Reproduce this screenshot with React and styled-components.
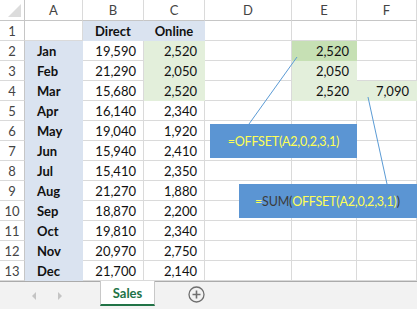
import React from 'react'
import styled, { createGlobalStyle } from 'styled-components'

const GlobalStyle = createGlobalStyle`
  html, body {
    margin: 0;
    padding: 0;
    background: #ffffff;
  }
  body {
    font-family: Lato, "Open Sans", Arial, sans-serif;
    width: 417px;
    height: 309px;
    overflow: hidden;
  }
`

const Frame = styled.div`
  position: relative;
  width: 417px;
  height: 309px;
  display: flex;
  flex-direction: column;
  overflow: hidden;
`

const Grid = styled.div`
  display: grid;
  grid-template-columns: 25px 58px 61px 61px 87px 65px 1fr;
  grid-template-rows: 21px repeat(13, 20px);
`

const Corner = styled.div`
  position: relative;
  box-sizing: border-box;
  border-right: 1px solid #c6c6c6;
  border-bottom: 1px solid #c6c6c6;
  background: #fff;

  &::after {
    content: '';
    position: absolute;
    right: 3px;
    bottom: 3px;
    width: 0;
    height: 0;
    border-left: 13px solid transparent;
    border-bottom: 13px solid #dcdcdc;
  }
`

const ColHead = styled.div`
  box-sizing: border-box;
  border-right: 1px solid #dadada;
  border-bottom: 1px solid #c6c6c6;
  display: flex;
  align-items: center;
  justify-content: center;
  font-size: 13px;
  color: #444;
  background: #fff;
`

const RowHead = styled.div`
  box-sizing: border-box;
  border-right: 1px solid #c6c6c6;
  border-bottom: 1px solid #dadada;
  display: flex;
  align-items: center;
  justify-content: center;
  font-size: 13px;
  color: #444;
  background: #fff;
`

const fills = {
  blue: '#dae3f0',
  green: '#e3efdb',
  dark: '#c6e0b4',
}

const Cell = styled.div`
  box-sizing: border-box;
  border-right: 1px solid ${(p) => (p.$fill ? 'transparent' : '#dadada')};
  border-bottom: 1px solid ${(p) => (p.$fill ? 'transparent' : '#dadada')};
  background: ${(p) => (p.$fill ? fills[p.$fill] : '#fff')};
  display: flex;
  align-items: center;
  justify-content: ${(p) =>
    p.$align === 'left' ? 'flex-start' : p.$align === 'center' ? 'center' : 'flex-end'};
  padding: ${(p) => (p.$align === 'left' ? '0 0 0 12px' : p.$align === 'center' ? '0' : '0 7px 0 0')};
  font-size: 13px;
  font-weight: ${(p) => (p.$bold ? 700 : 400)};
  color: #111;
  white-space: nowrap;
`

const TabBar = styled.div`
  flex: 1;
  display: flex;
  align-items: stretch;
  background: #f2f2f2;
  border-top: 1px solid #ababab;
`

const Arrows = styled.div`
  width: 100px;
  display: flex;
  align-items: center;
  justify-content: center;
  gap: 22px;
  padding-right: 6px;
  box-sizing: border-box;
`

const Arrow = styled.span`
  width: 0;
  height: 0;
  border-top: 4px solid transparent;
  border-bottom: 4px solid transparent;
  ${(p) => (p.$dir === 'left' ? 'border-right: 4px solid #c4c4c4;' : 'border-left: 4px solid #c4c4c4;')}
`

const Tab = styled.div`
  width: 55px;
  margin-top: -1px;
  margin-bottom: 3px;
  box-sizing: border-box;
  background: #fff;
  border-left: 1px solid #c8c8c8;
  border-right: 1px solid #c8c8c8;
  border-bottom: 2px solid #217346;
  display: flex;
  align-items: center;
  justify-content: center;
  font-size: 13px;
  font-weight: 700;
  color: #217346;
`

const AddButton = styled.div`
  margin-left: 33px;
  display: flex;
  align-items: center;
  padding-bottom: 2px;
`

const Wires = styled.svg`
  position: absolute;
  left: 0;
  top: 0;
  pointer-events: none;
`

const Callout = styled.div`
  position: absolute;
  left: ${(p) => p.$x}px;
  top: ${(p) => p.$y}px;
  width: ${(p) => p.$w}px;
  height: ${(p) => p.$h}px;
  background: #5b95d3;
  display: flex;
  align-items: center;
  justify-content: ${(p) => (p.$start ? 'flex-start' : 'center')};
  padding-left: ${(p) => p.$pad || 0}px;
  box-sizing: border-box;
  font-size: 12.5px;
  letter-spacing: -0.2px;
  color: #ffff55;
  white-space: nowrap;
`

const Dim = styled.span`
  color: #3b3b3b;
`

const months = [
  ['Jan', '19,590', '2,520'],
  ['Feb', '21,290', '2,050'],
  ['Mar', '15,680', '2,520'],
  ['Apr', '16,140', '2,340'],
  ['May', '19,040', '1,920'],
  ['Jun', '15,940', '2,410'],
  ['Jul', '15,410', '2,350'],
  ['Aug', '21,270', '1,880'],
  ['Sep', '18,870', '2,200'],
  ['Oct', '19,810', '2,340'],
  ['Nov', '20,970', '2,750'],
  ['Dec', '21,700', '2,140'],
]

const extra = {
  0: { e: ['2,520', 'dark'] },
  1: { e: ['2,050', 'green'] },
  2: { e: ['2,520', 'green'], f: ['7,090', 'green'] },
}

const App = () => {
  return (
    <Frame>
      <GlobalStyle />
      <Grid>
        <Corner />
        {['A', 'B', 'C', 'D', 'E', 'F'].map((l) => (
          <ColHead key={l}>{l}</ColHead>
        ))}

        <RowHead>1</RowHead>
        <Cell />
        <Cell $fill="blue" $align="center" $bold>Direct</Cell>
        <Cell $fill="blue" $align="center" $bold>Online</Cell>
        <Cell />
        <Cell />
        <Cell />

        {months.map((m, i) => {
          const x = extra[i] || {}
          return (
            <React.Fragment key={m[0]}>
              <RowHead>{i + 2}</RowHead>
              <Cell $fill="blue" $align="left" $bold>{m[0]}</Cell>
              <Cell>{m[1]}</Cell>
              <Cell $fill={i < 3 ? 'green' : undefined}>{m[2]}</Cell>
              <Cell />
              <Cell $fill={x.e && x.e[1]}>{x.e && x.e[0]}</Cell>
              <Cell $fill={x.f && x.f[1]}>{x.f && x.f[0]}</Cell>
            </React.Fragment>
          )
        })}
      </Grid>

      <TabBar>
        <Arrows>
          <Arrow $dir="left" />
          <Arrow $dir="right" />
        </Arrows>
        <Tab>Sales</Tab>
        <AddButton>
          <svg width="17" height="17" viewBox="0 0 17 17">
            <circle cx="8.5" cy="8.5" r="7.5" fill="none" stroke="#6f6f6f" strokeWidth="1.3" />
            <path d="M8.5 4.5v8M4.5 8.5h8" stroke="#6f6f6f" strokeWidth="1.6" />
          </svg>
        </AddButton>
      </TabBar>

      <Wires width="417" height="309">
        <line x1="297" y1="57" x2="249" y2="124" stroke="#5b9bd5" strokeWidth="1" />
        <line x1="368" y1="97" x2="387" y2="184" stroke="#5b9bd5" strokeWidth="1" />
      </Wires>

      <Callout $x={210} $y={124} $w={147} $h={34}>
        =OFFSET(A2,0,2,3,1)
      </Callout>
      <Callout $x={239} $y={184} $w={178} $h={34} $start $pad={16}>
        =<Dim>SUM(</Dim>OFFSET(A2,0,2,3,1)<Dim>)</Dim>
      </Callout>
    </Frame>
  )
}

export default App
